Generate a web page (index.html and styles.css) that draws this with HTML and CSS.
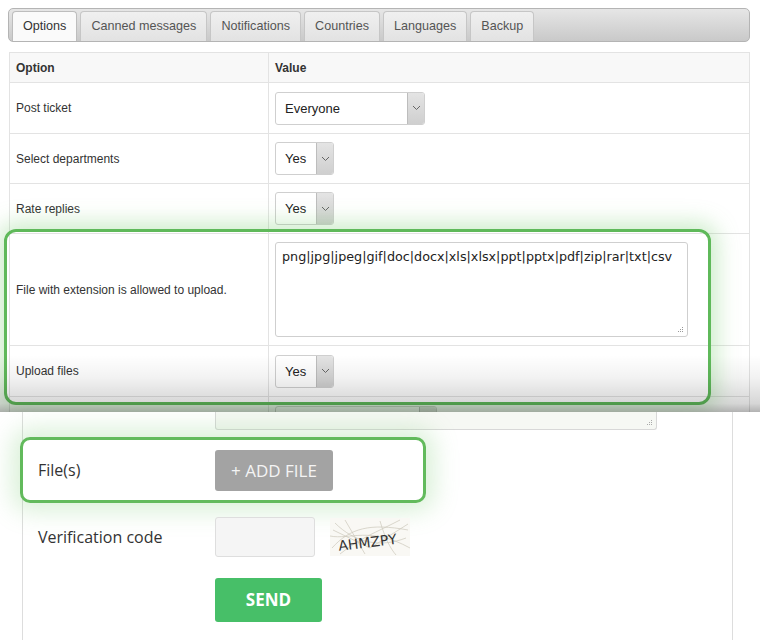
FILE: index.html
```html
<!DOCTYPE html>
<html>
<head>
<meta charset="utf-8">
<link rel="stylesheet" href="styles.css">
</head>
<body>
<div class="admin">
  <div class="tabbar">
    <div class="tab active">Options</div>
    <div class="tab">Canned messages</div>
    <div class="tab">Notifications</div>
    <div class="tab">Countries</div>
    <div class="tab">Languages</div>
    <div class="tab">Backup</div>
  </div>
  <table class="opts">
    <tr class="head"><th class="c1">Option</th><th>Value</th></tr>
    <tr class="r51"><td>Post ticket</td><td><div class="sel wide"><span class="val">Everyone</span><span class="arr"><svg width="9" height="6" viewBox="0 0 9 6"><path d="M1 1l3.5 3.5L8 1" fill="none" stroke="#666" stroke-width="1"/></svg></span></div></td></tr>
    <tr class="r50"><td>Select departments</td><td><div class="sel"><span class="val">Yes</span><span class="arr"><svg width="9" height="6" viewBox="0 0 9 6"><path d="M1 1l3.5 3.5L8 1" fill="none" stroke="#666" stroke-width="1"/></svg></span></div></td></tr>
    <tr class="r50"><td>Rate replies</td><td><div class="sel"><span class="val">Yes</span><span class="arr"><svg width="9" height="6" viewBox="0 0 9 6"><path d="M1 1l3.5 3.5L8 1" fill="none" stroke="#666" stroke-width="1"/></svg></span></div></td></tr>
    <tr class="r112"><td>File with extension is allowed to upload.</td><td><div class="ext">png|jpg|jpeg|gif|doc|docx|xls|xlsx|ppt|pptx|pdf|zip|rar|txt|csv<svg class="grip" width="7" height="7" viewBox="0 0 7 7"><g fill="#999"><rect x="5" y="1" width="1" height="1"/><rect x="3" y="3" width="1" height="1"/><rect x="5" y="3" width="1" height="1"/><rect x="1" y="5" width="1" height="1"/><rect x="3" y="5" width="1" height="1"/><rect x="5" y="5" width="1" height="1"/></g></svg></div></td></tr>
    <tr class="r51"><td>Upload files</td><td><div class="sel"><span class="val">Yes</span><span class="arr"><svg width="9" height="6" viewBox="0 0 9 6"><path d="M1 1l3.5 3.5L8 1" fill="none" stroke="#666" stroke-width="1"/></svg></span></div></td></tr>
    <tr class="r51 last"><td></td><td><div class="sel wide2"><span class="val"></span><span class="arr"></span></div></td></tr>
  </table>
  <div class="hl-top"></div>
  <div class="fade"></div>
</div>
<div class="form">
  <div class="ta-rest"><svg width="7" height="7" viewBox="0 0 7 7"><g fill="#aaa"><rect x="5" y="1" width="1" height="1"/><rect x="3" y="3" width="1" height="1"/><rect x="5" y="3" width="1" height="1"/><rect x="1" y="5" width="1" height="1"/><rect x="3" y="5" width="1" height="1"/><rect x="5" y="5" width="1" height="1"/></g></svg></div>
  <div class="frow files">
    <div class="flabel">File(s)</div>
    <div class="addbtn">+ ADD FILE</div>
  </div>
  <div class="frow verify">
    <div class="flabel">Verification code</div>
    <div class="vinput"></div>
    <svg class="captcha" width="80" height="38" viewBox="0 0 80 38">
      <rect width="80" height="38" fill="#f9f8f4"/>
      <g fill="none" stroke="#cbc7ba" stroke-width="0.7">
        <path d="M2 30 C20 10, 40 5, 78 12"/>
        <path d="M5 5 C25 25, 50 30, 76 20"/>
        <path d="M10 36 C30 20, 45 15, 70 2"/>
        <path d="M0 18 C20 22, 40 8, 80 30"/>
        <path d="M15 2 L35 36"/>
        <path d="M50 3 C55 20, 60 30, 66 37"/>
        <path d="M3 12 L40 30 L78 6"/>
      </g>
      <text x="8" y="29" transform="rotate(-7 40 22)" font-family="DejaVu Sans, sans-serif" font-size="14" fill="#333">AHMZPY</text>
    </svg>
  </div>
  <div class="frow sendrow">
    <div class="flabel"></div>
    <div class="sendbtn">SEND</div>
  </div>
</div>
</body>
</html>
```
FILE: styles.css
```css
* { box-sizing: border-box; }
html, body { margin: 0; padding: 0; background: #fff; }
body { width: 760px; height: 640px; overflow: hidden; }

.admin {
  position: relative;
  height: 412px;
  overflow: hidden;
  padding: 8px 10px 0 8px;
  font-family: "Liberation Sans", Arial, sans-serif;
  color: #333;
}

.tabbar {
  display: flex;
  gap: 3px;
  height: 34px;
  padding: 3px 3px 0 3px;
  border: 1px solid #b4b4b4;
  border-radius: 5px;
  background: linear-gradient(#e6e6e6, #c9c9c9);
  align-items: flex-end;
}
.tab {
  height: 30px;
  line-height: 29px;
  padding: 0 10px;
  font-size: 12.6px;
  color: #555;
  border: 1px solid #c6c6c6;
  border-bottom: none;
  border-radius: 4px 4px 0 0;
  background: linear-gradient(#f0f0f0, #e2e2e2);
}
.tab.active {
  background: #fafafa;
  color: #333;
  border-color: #bdbdbd;
}

.opts {
  margin-top: 10px;
  margin-left: 1px;
  width: 741px;
  border-collapse: collapse;
  font-size: 12px;
  table-layout: fixed;
}
.opts th, .opts td {
  border: 1px solid #e3e3e3;
  padding: 0 6px;
  text-align: left;
  vertical-align: middle;
}
.opts th.c1 { width: 259px; }
.opts tr.head th {
  height: 30px;
  background: #f8f8f8;
  font-weight: bold;
}
.opts tr.r51 td { height: 51px; }
.opts tr.r50 td { height: 50px; }
.opts tr.r112 td { height: 112px; }

.sel {
  display: flex;
  width: 59px;
  height: 33px;
  border: 1px solid #cfcfcf;
  border-radius: 3px;
  background: #fff;
  overflow: hidden;
}
.sel.wide { width: 150px; }
.sel.wide2 { width: 162px; }
.sel .val {
  flex: 1;
  padding-left: 9px;
  line-height: 31px;
  font-size: 13px;
  color: #222;
}
.sel .arr {
  width: 17px;
  border-left: 1px solid #bdbdbd;
  background: linear-gradient(#e4e4e4, #cfcfcf);
  display: flex;
  align-items: center;
  justify-content: center;
}

.ext {
  position: relative;
  width: 413px;
  height: 95px;
  border: 1px solid #cfcfcf;
  border-radius: 3px;
  padding: 6px 6px;
  font-family: "DejaVu Sans", Verdana, sans-serif;
  font-size: 12.75px;
  line-height: 16px;
  color: #222;
  background: #fff;
}
.ext .grip {
  position: absolute;
  right: 3px;
  bottom: 3px;
}

.hl-top {
  position: absolute;
  left: 4px;
  top: 229px;
  width: 707px;
  height: 176px;
  border: 3px solid #5fb95a;
  border-radius: 12px;
  box-shadow: 0 0 22px 6px rgba(110, 200, 100, 0.35);
}

.fade {
  position: absolute;
  left: 0;
  right: 0;
  top: 355px;
  height: 57px;
  background: linear-gradient(rgba(0,0,0,0) 0%, rgba(0,0,0,0.05) 40%, rgba(0,0,0,0.16) 85%, rgba(0,0,0,0.3) 100%);
}

.form {
  position: relative;
  margin-left: 22px;
  width: 711px;
  height: 228px;
  border-left: 1px solid #ddd;
  border-right: 1px solid #ddd;
  font-family: "Open Sans", sans-serif;
  color: #333;
}

.ta-rest {
  margin-left: 192px;
  width: 442px;
  height: 18px;
  border: 1px solid #d8d8d8;
  border-top: none;
  border-radius: 0 0 3px 3px;
  background: #f6f8f4;
  display: flex;
  justify-content: flex-end;
  align-items: flex-end;
  padding: 0 3px 3px 0;
}

.frow {
  display: flex;
  align-items: center;
}
.flabel {
  width: 177px;
  font-size: 16px;
  color: #333;
}

.files {
  margin-top: 7px;
  margin-left: -3px;
  width: 406px;
  height: 66px;
  padding-left: 15px;
  border: 3px solid #62ba5c;
  border-radius: 10px;
  background: #fff;
  box-shadow: 0 0 24px 8px rgba(120, 200, 110, 0.28);
}
.addbtn {
  width: 118px;
  height: 41px;
  line-height: 41px;
  text-align: center;
  background: #a3a3a3;
  color: #f4f4f4;
  font-size: 17px;
  border-radius: 3px;
}

.verify {
  margin-top: 14px;
  padding-left: 15px;
}
.vinput {
  width: 100px;
  height: 40px;
  background: #f5f5f5;
  border: 1px solid #dedede;
  border-radius: 3px;
}
.captcha { margin-left: 15px; }

.sendrow {
  margin-top: 21px;
  padding-left: 15px;
}
.sendbtn {
  width: 107px;
  height: 44px;
  line-height: 44px;
  text-align: center;
  background: #47bf68;
  color: #fff;
  font-weight: bold;
  font-size: 17px;
  border-radius: 3px;
}
```
